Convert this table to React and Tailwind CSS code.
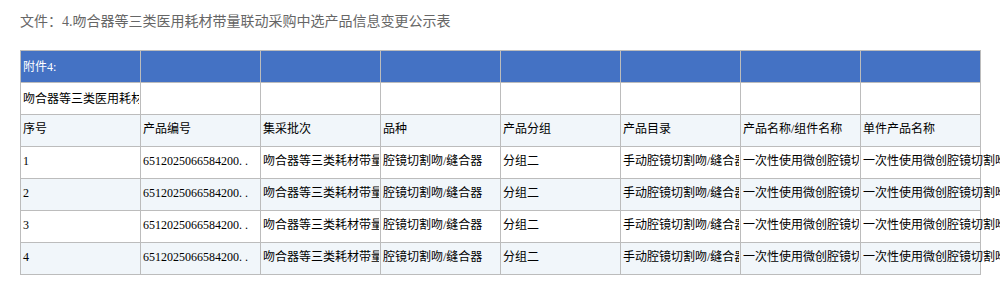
const cjk = "font-['Liberation_Serif','Noto_Sans_CJK_SC',serif]";

const headers = [
  "序号",
  "产品编号",
  "集采批次",
  "品种",
  "产品分组",
  "产品目录",
  "产品名称/组件名称",
  "单件产品名称",
];

const rows = [1, 2, 3, 4].map((n) => [
  String(n),
  <>
    6512025066584200<span className="tracking-[3px]">..</span>
  </>,
  "吻合器等三类耗材带量联动采购",
  "腔镜切割吻/缝合器",
  "分组二",
  "手动腔镜切割吻/缝合器",
  "一次性使用微创腔镜切割吻合器",
  "一次性使用微创腔镜切割吻合器",
]);

function Cell({ children, last, className = "" }) {
  return (
    <td className={`border border-[#bcbcbc] p-0 h-8 w-[120px] align-middle ${className}`}>
      <div
        className={`w-[118px] whitespace-nowrap pl-[2px] leading-5 ${
          last ? "overflow-visible" : "overflow-hidden"
        }`}
      >
        {children}
      </div>
    </td>
  );
}

export default function App() {
  return (
    <div className={`w-[1000px] h-[304px] overflow-hidden bg-white ${cjk}`}>
      {/* 标题 */}
      <div className="pl-5 pt-3 h-[50px] text-[14px] leading-5 text-[#666]">
        文件：4.吻合器等三类医用耗材带量联动采购中选产品信息变更公示表
      </div>

      <table className="ml-5 w-[960px] table-fixed border-collapse text-[12px] text-black">
        <colgroup>
          {headers.map((h) => (
            <col key={h} className="w-[120px]" />
          ))}
        </colgroup>
        <tbody>
          <tr className="bg-[#4472c4] text-white">
            {headers.map((h, i) => (
              <Cell key={i} last={i === 7}>
                {i === 0 ? "附件4:" : ""}
              </Cell>
            ))}
          </tr>
          <tr className="bg-white">
            {headers.map((h, i) => (
              <Cell key={i} last={i === 7}>
                {i === 0 ? "吻合器等三类医用耗材带量联动采购中选产品信息变更公示表" : ""}
              </Cell>
            ))}
          </tr>
          <tr className="bg-[#f1f6fa]">
            {headers.map((h, i) => (
              <Cell key={i} last={i === 7}>
                <span className="relative -top-[2px]">{h}</span>
              </Cell>
            ))}
          </tr>
          {rows.map((r, ri) => (
            <tr key={ri} className={ri % 2 === 0 ? "bg-white" : "bg-[#f1f6fa]"}>
              {r.map((v, i) => (
                <Cell key={i} last={i === 7}>
                  <span className="relative -top-[2px]">{v}</span>
                </Cell>
              ))}
            </tr>
          ))}
        </tbody>
      </table>
    </div>
  );
}
